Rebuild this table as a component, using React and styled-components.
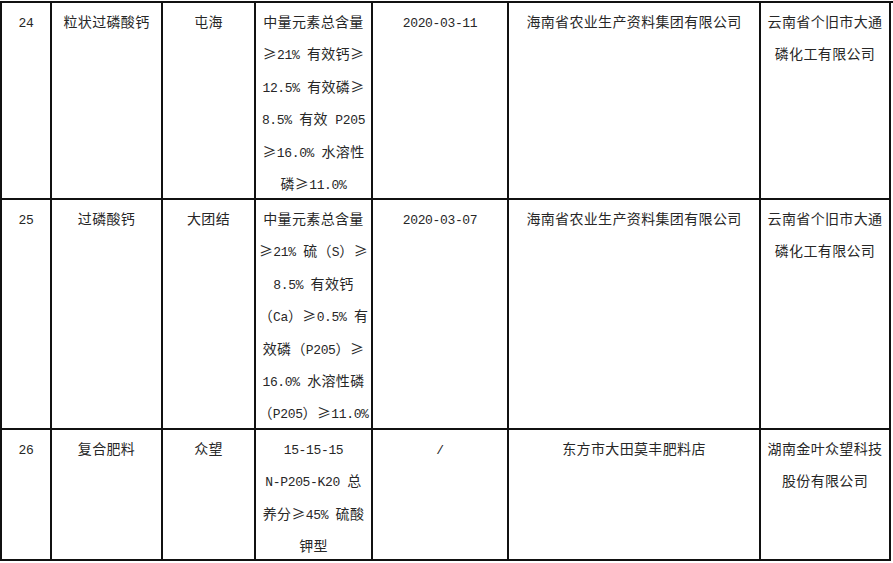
import styled, { createGlobalStyle } from "styled-components";

const GlobalStyle = createGlobalStyle`
  html, body {
    margin: 0;
    padding: 0;
    background: #fff;
  }
`;

const Page = styled.div`
  padding-top: 1px;
  width: 893px;
  height: 563px;
  overflow: hidden;
  background: #fff;
`;

const Table = styled.div`
  width: 891px;
  border-top: 2px solid #111;
  border-left: 2px solid #111;
`;

const Row = styled.div`
  display: grid;
  grid-template-columns: 50px 111px 93px 117px 136px 252px 130px;
  height: ${(p) => p.$h}px;
`;

const Cell = styled.div`
  box-sizing: border-box;
  border-right: 2px solid #111;
  border-bottom: 2px solid #111;
  padding-top: 2px;
  overflow: hidden;
  text-align: center;
  color: #272727;
  font-family: "Noto Sans CJK SC", "Noto Sans", sans-serif;
  font-size: 14px;
  letter-spacing: 0.35px;
  line-height: 32.4px;
`;

const Line = styled.div`
  height: 32.4px;
  white-space: nowrap;
`;

const Latin = styled.span`
  font-family: "Liberation Mono", "DejaVu Sans Mono", monospace;
  font-size: 13px;
  line-height: 1;
  letter-spacing: -0.35px;
`;

const rows = [
  {
    h: 197,
    cells: [
      ["24"],
      ["粒状过磷酸钙"],
      ["屯海"],
      [
        "中量元素总含量",
        "≥21% 有效钙≥",
        "12.5% 有效磷≥",
        "8.5% 有效 P205",
        "≥16.0% 水溶性",
        "磷≥11.0%",
      ],
      ["2020-03-11"],
      ["海南省农业生产资料集团有限公司"],
      ["云南省个旧市大通", "磷化工有限公司"],
    ],
  },
  {
    h: 230,
    cells: [
      ["25"],
      ["过磷酸钙"],
      ["大团结"],
      [
        "中量元素总含量",
        "≥21% 硫（S）≥",
        "8.5% 有效钙",
        "（Ca）≥0.5% 有",
        "效磷（P205）≥",
        "16.0% 水溶性磷",
        "（P205）≥11.0%",
      ],
      ["2020-03-07"],
      ["海南省农业生产资料集团有限公司"],
      ["云南省个旧市大通", "磷化工有限公司"],
    ],
  },
  {
    h: 131,
    cells: [
      ["26"],
      ["复合肥料"],
      ["众望"],
      ["15-15-15", "N-P205-K20 总", "养分≥45% 硫酸", "钾型"],
      ["/"],
      ["东方市大田莫丰肥料店"],
      ["湖南金叶众望科技", "股份有限公司"],
    ],
  },
];

// latin runs get the half-width mono face, the rest stays in the CJK face
const MixedText = ({ text }) =>
  text
    .split(/([\x20-\x7E]+)/)
    .filter(Boolean)
    .map((part, i) =>
      /^[\x20-\x7E]+$/.test(part) ? <Latin key={i}>{part}</Latin> : part
    );

const App = () => {
  return (
    <Page>
      <GlobalStyle />
      <Table>
        {rows.map((row, r) => (
          <Row key={r} $h={row.h}>
            {row.cells.map((lines, c) => (
              <Cell key={c}>
                {lines.map((line, l) => (
                  <Line key={l}>
                    <MixedText text={line} />
                  </Line>
                ))}
              </Cell>
            ))}
          </Row>
        ))}
      </Table>
    </Page>
  );
};

export default App;
